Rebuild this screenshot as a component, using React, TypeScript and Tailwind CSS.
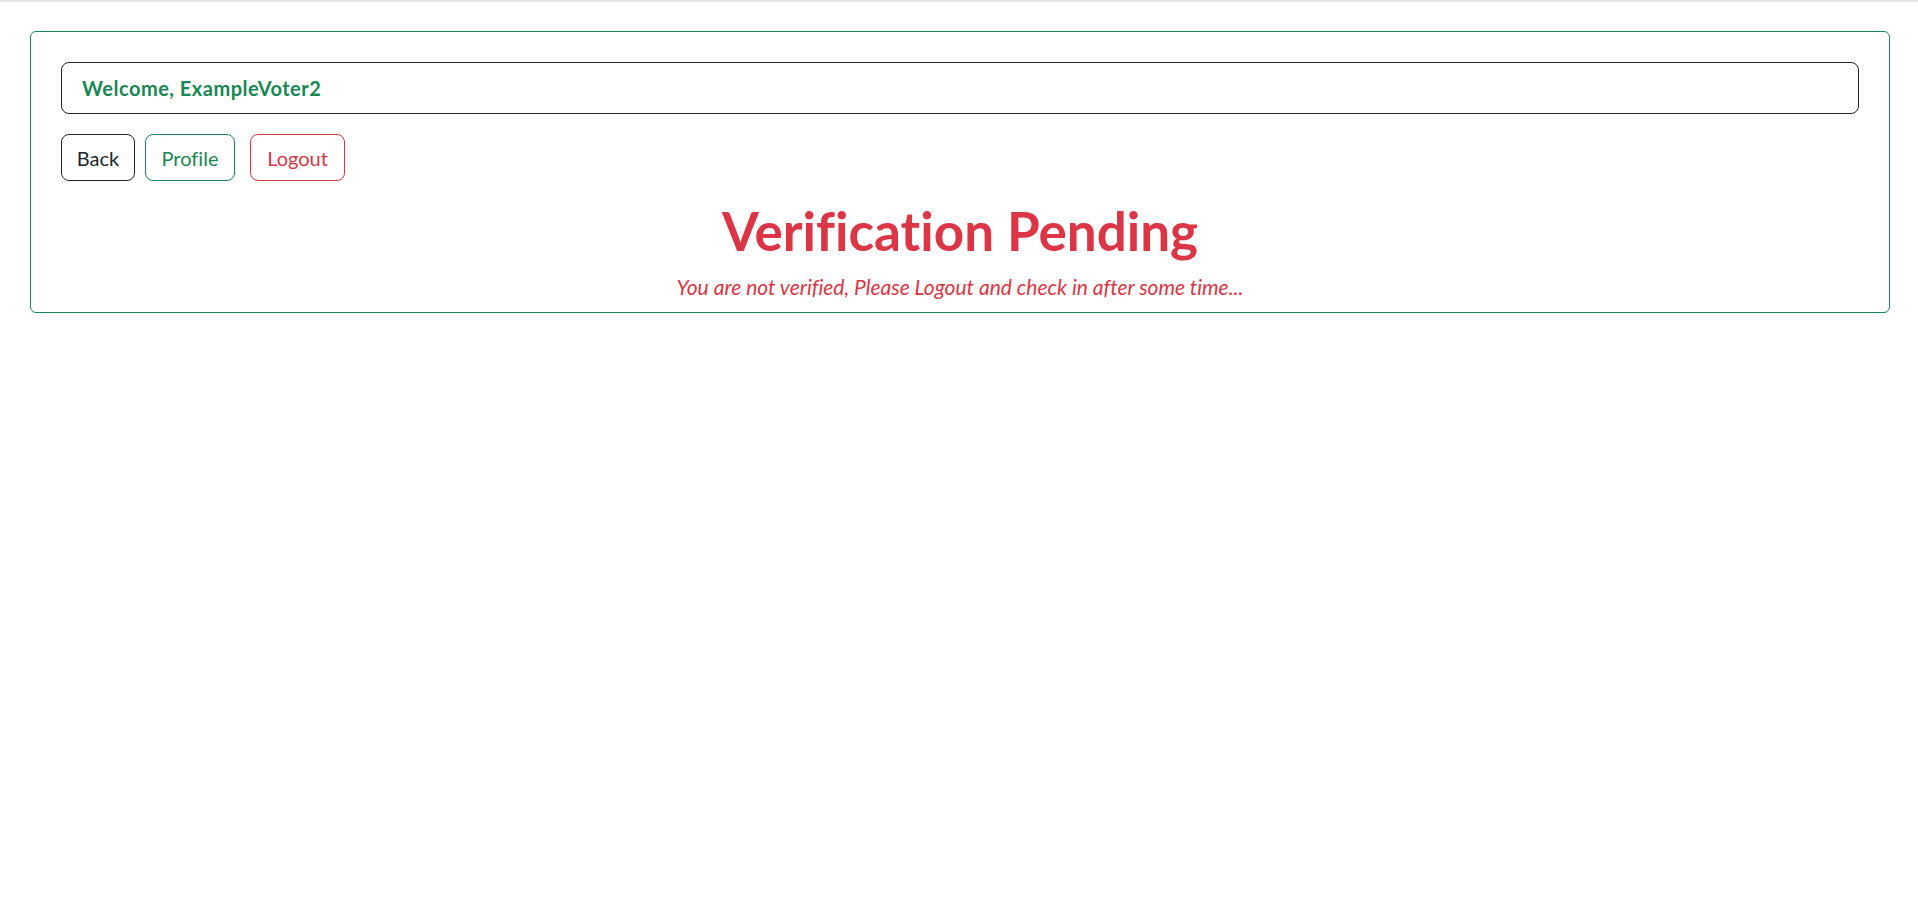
export default function App() {
  const font = { fontFamily: "Lato, 'Open Sans', sans-serif" };

  return (
    <div className="min-h-screen bg-white [font-variant-ligatures:none]" style={font}>
      <div className="h-0.5 bg-[#e2e2e2]" />
      <div className="mt-[29px] mr-[28px] ml-[30px] rounded-md border border-[#198754] px-[30px] pt-[30px] pb-[10px]">
        <div className="rounded-lg border border-[#212529] px-5 py-[13px]">
          <h5 className="text-[20px] leading-6 font-bold tracking-[0.5px] text-[#198754]">
            Welcome, ExampleVoter2
          </h5>
        </div>

        <div className="mt-5 flex items-center">
          <button className="h-[47px] w-[74px] rounded-lg border border-[#212529] text-[20px] text-[#212529]">
            Back
          </button>
          <button className="ml-[10px] h-[47px] w-[90px] rounded-lg border border-[#198754] text-[20px] text-[#198754]">
            Profile
          </button>
          <button className="ml-[15px] h-[47px] w-[95px] rounded-lg border border-[#dc3545] text-[20px] text-[#dc3545]">
            Logout
          </button>
        </div>

        <h1 className="mt-[18px] mb-2 text-center text-[53px] leading-[1.2] font-bold text-[#dc3545]">
          Verification Pending
        </h1>
        <p className="text-center text-[21px] leading-[1.5] text-[#dc3545] italic">
          You are not verified, Please Logout and check in after some time...
        </p>
      </div>
    </div>
  );
}
